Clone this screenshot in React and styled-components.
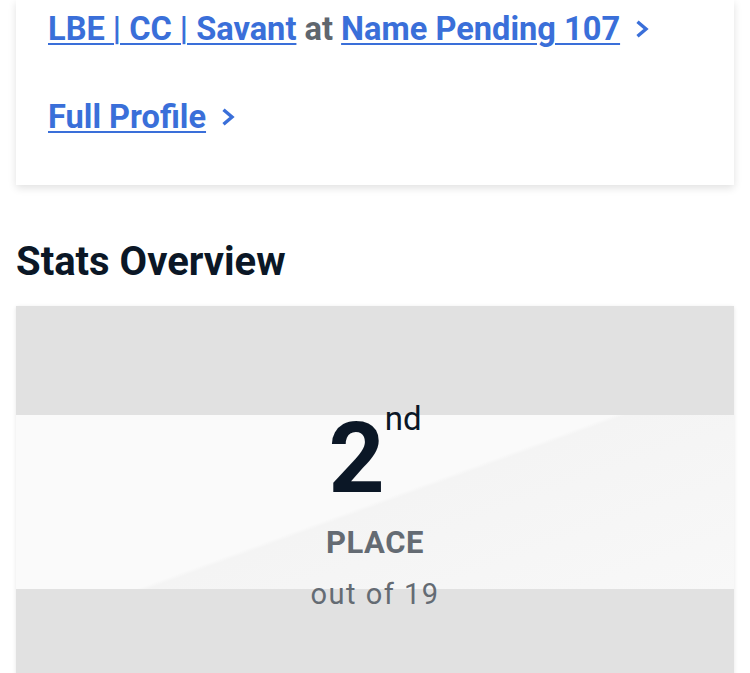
import React from "react";
import styled, { createGlobalStyle } from "styled-components";

const GlobalStyle = createGlobalStyle`
  body {
    margin: 0;
    background: #ffffff;
    font-family: Roboto, "Noto Sans", sans-serif;
  }
`;

const Page = styled.div`
  padding: 0 16px 40px;
  display: flex;
  flex-direction: column;
`;

const Card = styled.div`
  background: #ffffff;
  box-shadow: 0 3px 8px rgba(0, 0, 0, 0.12);
  padding: 9px 32px 48px;
  display: flex;
  flex-direction: column;
  gap: 48px;
`;

const LinkRow = styled.div`
  display: flex;
  align-items: center;
  font-size: 32.6px;
  line-height: 40px;
  font-weight: 700;
  color: #5f666e;
`;

const Link = styled.a`
  color: #3a6fd9;
  text-decoration: underline;
  text-decoration-thickness: 2px;
  text-underline-offset: 3px;
`;

const Chevron = styled.svg`
  width: 14px;
  height: 18px;
  margin-left: 15px;
  flex-shrink: 0;
`;

const Heading = styled.h2`
  margin: 53px 0 20px;
  font-size: 40px;
  line-height: 48px;
  font-weight: 700;
  color: #0b1726;
`;

const StatsCard = styled.div`
  height: 420px;
  box-shadow: 0 1px 4px rgba(0, 0, 0, 0.1);
  background:
    linear-gradient(160deg, #fafafa 0%, #fafafa 50%, #f4f4f4 51%, #f8f8f8 100%)
      0 109px / 100% 174px no-repeat,
    #e1e1e1;
  display: flex;
  flex-direction: column;
  align-items: center;
  padding-top: 98px;
  box-sizing: border-box;
`;

const Rank = styled.div`
  font-size: 98px;
  line-height: 110px;
  font-weight: 700;
  color: #0b1726;
`;

const Suffix = styled.sup`
  margin-left: 0;
  font-size: 33px;
  line-height: 0;
  font-weight: 400;
  vertical-align: 62px;
`;

const Label = styled.div`
  margin-top: 11px;
  font-size: 31px;
  line-height: 36px;
  font-weight: 700;
  letter-spacing: 0.5px;
  color: #646b73;
`;

const Sub = styled.div`
  margin-top: 15px;
  font-size: 29px;
  line-height: 36px;
  font-weight: 400;
  letter-spacing: 1.5px;
  color: #646b73;
`;

const ChevronIcon = () => (
  <Chevron viewBox="0 0 14 18">
    <path
      d="M2.5 1.8 L11 9 L2.5 16.2"
      fill="none"
      stroke="#3a6fd9"
      strokeWidth="3.4"
    />
  </Chevron>
);

const App = () => {
  return (
    <Page>
      <GlobalStyle />
      <Card>
        <LinkRow>
          <span>
            <Link href="#">LBE | CC | Savant</Link> at{" "}
            <Link href="#">Name Pending 107</Link>
          </span>
          <ChevronIcon />
        </LinkRow>
        <LinkRow>
          <Link href="#">Full Profile</Link>
          <ChevronIcon />
        </LinkRow>
      </Card>
      <Heading>Stats Overview</Heading>
      <StatsCard>
        <Rank>
          2<Suffix>nd</Suffix>
        </Rank>
        <Label>PLACE</Label>
        <Sub>out of 19</Sub>
      </StatsCard>
    </Page>
  );
};

export default App;
